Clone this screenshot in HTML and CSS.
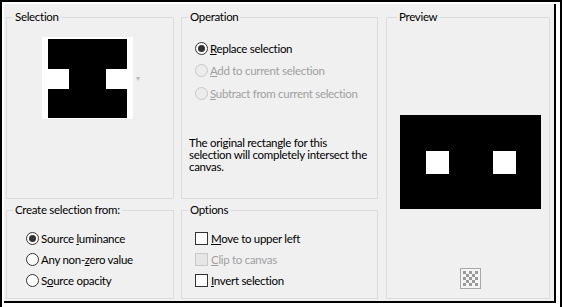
FILE: index.html
```html
<!DOCTYPE html>
<html lang="en">
<head>
  <meta charset="UTF-8">
  <title>Create Selection</title>
  <link rel="stylesheet" href="styles.css">
</head>
<body>
  <div class="frame">
    <div class="dialog">
      <fieldset class="group sel-box">
        <legend>Selection</legend>
        <div class="thumb-row">
          <div class="thumb">
            <svg width="91" height="82" viewBox="0 0 91 82">
              <rect x="6" y="2" width="79" height="79" fill="#000"/>
              <rect x="0" y="32" width="27" height="20" fill="#fff"/>
              <rect x="64" y="32" width="27" height="20" fill="#fff"/>
            </svg>
          </div>
          <span class="drop">&#9662;</span>
        </div>
      </fieldset>

      <fieldset class="group op-box">
        <legend>Operation</legend>
        <div class="choices op-choices">
          <label class="opt"><span class="radio checked"></span><span><u>R</u>eplace selection</span></label>
          <label class="opt off"><span class="radio"></span><span><u>A</u>dd to current selection</span></label>
          <label class="opt off"><span class="radio"></span><span><u>S</u>ubtract from current selection</span></label>
        </div>
        <p class="note">The original rectangle for this<br>selection will completely intersect the canvas.</p>
      </fieldset>

      <fieldset class="group preview-box">
        <legend>Preview</legend>
        <div class="preview">
          <svg width="141" height="94" viewBox="0 0 141 94">
            <rect width="141" height="94" fill="#000"/>
            <rect x="26" y="36" width="23" height="23" fill="#fff"/>
            <rect x="93" y="36" width="23" height="23" fill="#fff"/>
          </svg>
        </div>
        <div class="checker">
          <svg width="21" height="21" viewBox="0 0 21 21">
            <rect x="0.5" y="0.5" width="20" height="20" fill="#f4f4f4" stroke="#a8a8a8"/>
            <g fill="#9a9a9a">
              <rect x="3" y="3" width="3" height="3"/><rect x="9" y="3" width="3" height="3"/><rect x="15" y="3" width="3" height="3"/>
              <rect x="6" y="6" width="3" height="3"/><rect x="12" y="6" width="3" height="3"/>
              <rect x="3" y="9" width="3" height="3"/><rect x="9" y="9" width="3" height="3"/><rect x="15" y="9" width="3" height="3"/>
              <rect x="6" y="12" width="3" height="3"/><rect x="12" y="12" width="3" height="3"/>
              <rect x="3" y="15" width="3" height="3"/><rect x="9" y="15" width="3" height="3"/><rect x="15" y="15" width="3" height="3"/>
            </g>
          </svg>
        </div>
      </fieldset>

      <fieldset class="group from-box">
        <legend>Create selection from:</legend>
        <div class="choices low-choices">
          <label class="opt"><span class="radio checked"></span><span>Source <u>l</u>uminance</span></label>
          <label class="opt"><span class="radio"></span><span>Any non-<u>z</u>ero value</span></label>
          <label class="opt"><span class="radio"></span><span>S<u>o</u>urce opacity</span></label>
        </div>
      </fieldset>

      <fieldset class="group opt-box">
        <legend>Options</legend>
        <div class="choices low-choices">
          <label class="opt"><span class="check"></span><span><u>M</u>ove to upper left</span></label>
          <label class="opt off"><span class="check"></span><span><u>C</u>lip to canvas</span></label>
          <label class="opt"><span class="check"></span><span><u>I</u>nvert selection</span></label>
        </div>
      </fieldset>
    </div>
  </div>
</body>
</html>
```

FILE: styles.css
```css
body {
  margin: 0;
  background: #fff;
  font-family: Lato, "Liberation Sans", sans-serif;
  font-size: 11.5px;
  letter-spacing: -0.3px;
  color: #000;
}
.frame {
  width: 562px;
  height: 307px;
  box-sizing: border-box;
  border: 2px solid #000;
  border-bottom: none;
  padding: 2px 4px 0 2px;
}
.dialog {
  height: 299px;
  box-sizing: border-box;
  background: #f0f0f0;
  border-right: 2px solid #000;
  border-bottom: 2px solid #000;
  padding: 5px 3px 2px 2px;
  display: grid;
  grid-template-columns: 168px 197px 165px;
  grid-template-rows: 190px 97px;
  column-gap: 7px;
  row-gap: 3px;
}
.group {
  margin: 0;
  padding: 0;
  border: 1px solid #dcdcdc;
  min-width: 0;
}
.group legend {
  margin-left: 6px;
  padding: 0 2px;
  line-height: 16px;
}
.sel-box { grid-column: 1; grid-row: 1; }
.op-box { grid-column: 2; grid-row: 1; }
.preview-box { grid-column: 3; grid-row: 1 / 3; margin-left: 1px; }
.from-box { grid-column: 1; grid-row: 2; }
.opt-box { grid-column: 2; grid-row: 2; }

.thumb-row {
  display: flex;
  align-items: center;
  margin: 12px 0 0 35px;
}
.thumb {
  width: 91px;
  height: 82px;
  background: #fff;
}
.thumb svg { display: block; }
.drop {
  color: #b8b8b8;
  font-size: 8px;
  margin-left: 3px;
}

.choices {
  display: flex;
  flex-direction: column;
}
.op-choices {
  margin: 12px 0 0 13px;
}
.op-choices .opt { height: 22.5px; }
.low-choices {
  margin: 10px 0 0 19px;
}
.opt-box .low-choices { margin-left: 13px; }
.low-choices .opt { height: 21px; }
.opt {
  display: flex;
  align-items: center;
  gap: 2px;
}
.opt u { text-decoration-thickness: 1px; }
.opt.off { color: #a0a0a0; }

.radio {
  width: 13px;
  height: 13px;
  box-sizing: border-box;
  border: 1px solid #333;
  border-radius: 50%;
  background: #fff;
  display: flex;
  align-items: center;
  justify-content: center;
}
.radio.checked::after {
  content: "";
  width: 7px;
  height: 7px;
  border-radius: 50%;
  background: #333;
}
.off .radio {
  border-color: #c8c8c8;
  background: #ececec;
}
.check {
  width: 13px;
  height: 13px;
  box-sizing: border-box;
  border: 1px solid #333;
  background: #fff;
  margin-right: 1px;
}
.off .check {
  border-color: #c8c8c8;
  background: #e6e6e6;
}

.note {
  margin: 32px 2px 0 7px;
  line-height: 12px;
}

.preview-box {
  display: flex;
  flex-direction: column;
  align-items: center;
  padding-left: 4px;
}
.preview {
  margin-top: 90px;
}
.preview svg, .checker svg { display: block; }
.checker {
  margin-top: 59px;
}
```
